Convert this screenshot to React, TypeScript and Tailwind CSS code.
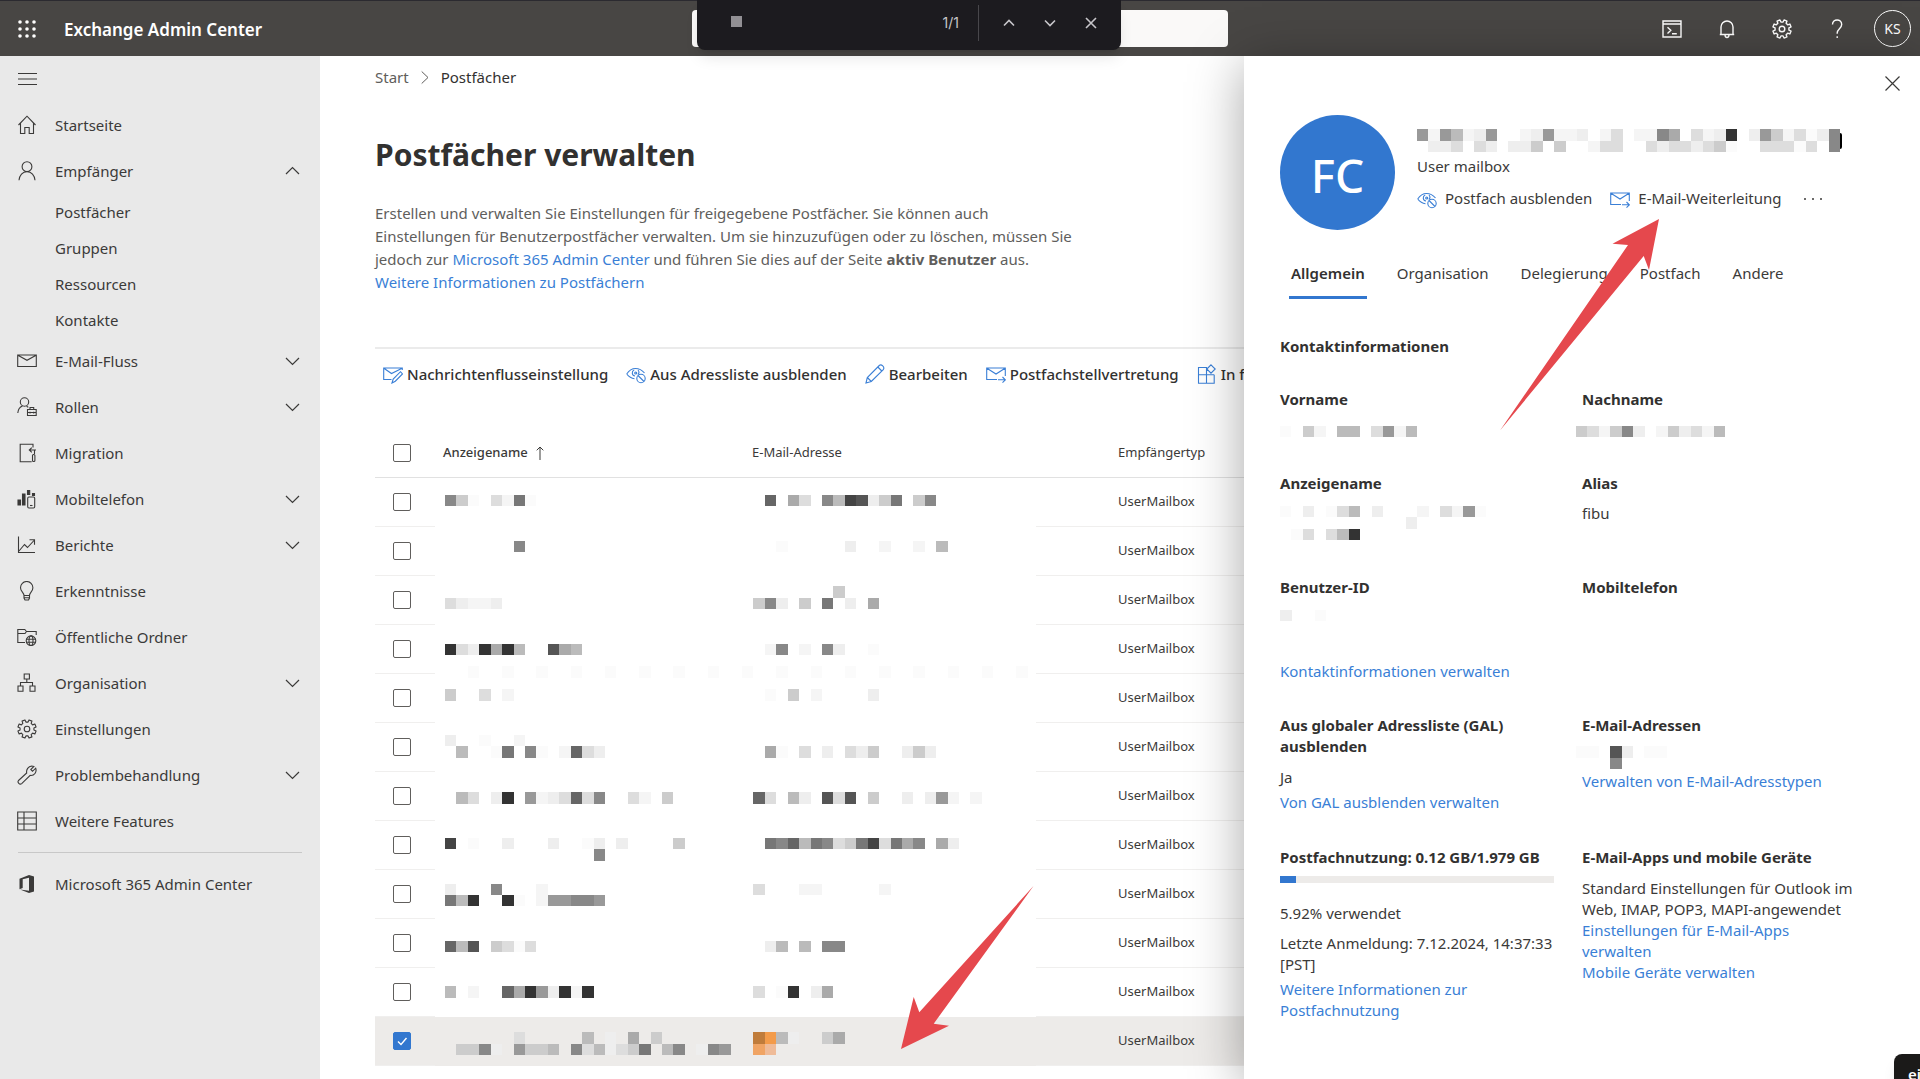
import { useState } from "react";
import type { ReactNode } from "react";

/* ---------- icons ---------- */

function Icon({ children, size = 20, className = "" }: { children: ReactNode; size?: number; className?: string }) {
  return (
    <svg
      width={size}
      height={size}
      viewBox="0 0 20 20"
      fill="none"
      stroke="currentColor"
      strokeWidth="1.1"
      className={"shrink-0 " + className}
      aria-hidden="true"
    >
      {children}
    </svg>
  );
}

// outline of a cog with eight teeth
function gearPath() {
  const points: string[] = [];
  for (let i = 0; i < 8; i++) {
    const base = (i * Math.PI) / 4 + Math.PI / 8;
    const steps = [
      [-0.24, 7],
      [-0.17, 9.3],
      [0.17, 9.3],
      [0.24, 7],
    ];
    steps.forEach(([angle, r]) => {
      const x = 10 + r * Math.cos(base + angle);
      const y = 10 + r * Math.sin(base + angle);
      points.push(`${x.toFixed(2)} ${y.toFixed(2)}`);
    });
  }
  return "M" + points.join("L") + "Z";
}

const icons = {
  home: <path d="M1.5 10 10 1.2l8.5 8.8M3.5 8v10.5h4.3v-6h4.4v6h4.3V8" />,
  person: <path d="M10 .8a4.9 4.9 0 0 1 4.9 4.9A4.9 4.9 0 0 1 10 10.6a4.9 4.9 0 0 1-4.9-4.9A4.9 4.9 0 0 1 10 .8ZM2 19.2c.4-4.800 3.600-8.600 8-8.600s7.600 3.800 8 8.600" />,
  mail: <path d="M.7 4h18.600v11.500H.7ZM.9 4.300 10 9.300l9.100-5" />,
  roles: (
    <>
      <circle cx="7.500" cy="5" r="4.200" />
      <path d="M.8 16c.3-3.500 2-6 4.700-7M9.500 9.200c.8.300 1.300.7 1.800 1.200M10.500 12.500h8.700v6h-8.700ZM13 12.500v-2h3.700v2M10.500 15.500h8.700M13 14.700v1.700M16.700 14.700v1.700" />
    </>
  ),
  migration: (
    <>
      <path d="M16 4.500V1.200H3.200v17.600h11.500M19 7h-6.500M14.800 4.700 12.300 7l2.500 2.300M17.500 7v4" />
      <rect x="15.500" y="11.500" width="2.400" height="7" rx="1" />
    </>
  ),
  mobile: (
    <>
      <path d="M1 11h2.500v5H1ZM5.500 5H8v11H5.500ZM10.500 1.500h2.200v4h-2.200ZM15.500 4.500h2v2h-2Z" fill="currentColor" />
      <rect x="10.700" y="8" width="7" height="11" rx="1.200" />
      <path d="M13 16.500h2.500" />
    </>
  ),
  reports: <path d="M1.500 1.500v16H18M2 16 7.500 9.500l3 3 6.500-7M12.500 4.700h5v5" />,
  bulb: <path d="M7 14.500c0-3-3.500-4-3.500-7.800a6.200 6.200 0 0 1 12.400 0c0 3.800-3.400 4.800-3.400 7.800ZM7 14.500V17l1 2h3.500l1-2v-2.500M7.200 16.700h5.300" />,
  folder: (
    <>
      <path d="M8 15.500H.8V2.500h7l1.700 2h9.700V8M.8 6.500H8l1.500-2" />
      <circle cx="14" cy="13.700" r="4.800" />
      <ellipse cx="14" cy="13.700" rx="2" ry="4.800" />
      <path d="M9.200 12.200h9.600M9.200 15.200h9.600" />
    </>
  ),
  org: <path d="M7.200 1h5.200v5H7.200ZM1 13h5v5.200H1ZM13 13h5v5.200h-5ZM9.800 6v3.500M3.500 13V9.500h12V13" />,
  gear: (
    <>
      <path d={gearPath()} strokeLinejoin="round" />
      <circle cx="10" cy="10" r="2.800" />
    </>
  ),
  wrench: <path d="M1.500 15.500 9.700 8c-.7-3.300 1.600-6.700 5-7 1 0 1.500.1 2.200.4L13.800 4.500l1.700 1.800L18.700 3.200c1.400 4-1.500 7.700-5.500 7.200L4.700 18.600c-2 1.500-4.700-1-3.200-3.100Z" />,
  features: <path d="M.7 1h18.600v18H.7ZM.7 7h18.600M.7 13h18.600M7 1v18" />,
  office: (
    <path
      d="M2.500 4.800 12 1l5 1.500v15L12 19l-9-3.500 9 1.200V3.800L5.700 5.300v8.600l-3.200 1.400Z"
      fill="currentColor"
      stroke="none"
    />
  ),
  mailEdit: (
    <>
      <path d="M8.500 15.500H.7V4h18.600v2M.9 4.300l7.600 5.200 10.600-5.200" />
      <path d="M9 19l1.200-4L17.500 7.700l2 2.200-7.200 7.300Z" />
    </>
  ),
  eyeOff: (
    <>
      <path d="M.7 10C3 6.500 6 4.500 9.500 4.500S16 6 18.500 9M.7 10c2 2.500 4.500 4.300 7.800 4.700M12 6c1.200 1.500 1 3.500-.2 4.500M9 12c-3.500-.5-3.500-5-.8-6" />
      <circle cx="9.700" cy="9" r="1" />
      <circle cx="15" cy="14.500" r="4.200" />
      <path d="m12 11.500 6 6" />
    </>
  ),
  pencil: <path d="M1 19l1.300-5.500L14.500 1.300c2-1.300 5.300 1.700 4 4L6.300 17.500ZM2.300 13.500l4 4M12.800 3l4 4" />,
  mailForward: <path d="M11 15.500H.7V4h18.600v8M.9 4.300 10 10l9.100-5.700M12 15.800h7M16.500 13l2.800 2.800-2.800 2.800" />,
  apps: <path d="M10 3.500H1.500v15.700h15.700V10.700M1.500 10.700h15.700M9.500 3.500v15.700M14 .8l4.200 4.200L14 9.200 9.800 5Z" />,
  shell: <path d="M1 2h18v16H1ZM1 5h18M5.500 8.200l3.300 3.100-3.300 3.100M10 14.700h4.800" strokeWidth="1.400" />,
  bell: <path d="M4 15.500V8a6 6 0 0 1 12 0v7.500M2.800 15.500h14.400M8 15.700c0 3.700 4 3.700 4 0" strokeWidth="1.400" />,
  question: <path d="M5.500 5.500c0-6 9.200-6 9.200 0 0 4-4.500 4.500-4.500 8.500v.8M10.200 17.300v1.800" strokeWidth="1.400" />,
};

function Chevron({ open }: { open?: boolean }) {
  return (
    <svg width="15" height="15" viewBox="0 0 15 15" fill="none" stroke="currentColor" strokeWidth="1.200" aria-hidden="true">
      <path d={open ? "M1 10 7.500 3.500 14 10" : "M1 4 7.500 10.500 14 4"} />
    </svg>
  );
}

/* ---------- pixelated names and addresses ---------- */

const TONES: Record<string, string> = {
  f: "#f5f5f5",
  g: "#fbfbfb",
  P: "#c07c3b",
  Q: "#f39b4a",
  R: "#f0a464",
  S: "#efbb98",
};

// [row, column, one tone for each block]
type Run = [number, number, string];

function Mosaic({ runs, cols, rows, className = "" }: { runs: Run[]; cols: number; rows: number; className?: string }) {
  return (
    <svg
      width={Math.round((cols * 80) / 7)}
      height={Math.round((rows * 80) / 7)}
      viewBox={`0 0 ${cols} ${rows}`}
      preserveAspectRatio="none"
      shapeRendering="crispEdges"
      className={"block shrink-0 " + className}
      aria-hidden="true"
    >
      {runs.flatMap(([row, col, tones]) =>
        tones.split("").map((t, i) =>
          t === "." ? null : (
            <rect key={`${row}-${col + i}`} x={col + i} y={row} width="1" height="1" fill={TONES[t] ?? `#${t}${t}${t}`} />
          )
        )
      )}
    </svg>
  );
}

const tableRuns: Run[] = [
  [0, 0, "8cg.df7g"],
  [0, 28, "6.ad.8b45ec7.c8"],
  [4, 6, "8"],
  [4, 29, "g.....e..f..f.b"],
  [8, 34, "c"],
  [9, 0, "deffe"],
  [9, 27, "c8e.c.7.e.a"],
  [13, 0, "3de3a3b..5ab"],
  [13, 28, "f8.f.8e..g"],
  [15, 2, "g..g..g..g..g..g..g..g..g..g..g..g..g..g..g..g..g"],
  [17, 0, "c..d.f"],
  [17, 28, "g.c.f....e"],
  [21, 0, "e..g..f"],
  [22, 1, "b..g7.8g.f6de"],
  [22, 28, "ag.d.e.dec..ece"],
  [26, 1, "bd.e3.9fed6d8..df.c"],
  [26, 27, "6d.be.5d5.c..e.e9f.f"],
  [30, 0, "4.g..e...e..ge.e....c"],
  [30, 28, "786b78dc74d7a8.ae"],
  [31, 13, "8"],
  [34, 0, "e...8...f"],
  [34, 27, "d...ff.....f"],
  [35, 0, "7b3..3g.f99889"],
  [39, 0, "6b5.cdgd"],
  [39, 28, "eb.b.88"],
  [43, 0, "b.f..6a39e3f3"],
  [43, 27, "d.g3.ea"],
  [47, 6, "d.....b.e.a.c"],
  [47, 27, "PQbe..ca"],
  [48, 1, "cc8e.9ccb.8dbedc7.b8.e89"],
  [48, 27, "RS"],
];

const titleRuns: Run[] = [
  [0, 0, "9f9bfe9..fe9ffe.fd.ff8a.dfe3.e9cfdge8"],
  [1, 1, "eed.de.eec.c..fdd..dedded"],
  [1, 26, "cg..dddgd.8"],
];

/* ---------- sidebar ---------- */

type NavItem = { label: string; icon: ReactNode; open?: boolean; children?: string[]; more?: boolean };

const navItems: NavItem[] = [
  { label: "Startseite", icon: icons.home },
  { label: "Empfänger", icon: icons.person, open: true, more: true, children: ["Postfächer", "Gruppen", "Ressourcen", "Kontakte"] },
  { label: "E-Mail-Fluss", icon: icons.mail, more: true },
  { label: "Rollen", icon: icons.roles, more: true },
  { label: "Migration", icon: icons.migration },
  { label: "Mobiltelefon", icon: icons.mobile, more: true },
  { label: "Berichte", icon: icons.reports, more: true },
  { label: "Erkenntnisse", icon: icons.bulb },
  { label: "Öffentliche Ordner", icon: icons.folder },
  { label: "Organisation", icon: icons.org, more: true },
  { label: "Einstellungen", icon: icons.gear },
  { label: "Problembehandlung", icon: icons.wrench, more: true },
  { label: "Weitere Features", icon: icons.features },
];

function Sidebar() {
  return (
    <nav className="w-80 shrink-0 bg-[#e9e9e9] text-[#3b3a39]">
      <button aria-label="Navigation" className="flex h-[46px] items-center pl-[18px]">
        <svg width="19" height="14" viewBox="0 0 19 14" stroke="currentColor" strokeWidth="1.200" aria-hidden="true">
          <path d="M0 1.500h19M0 7h19M0 12.500h19" />
        </svg>
      </button>
      <ul>
        {navItems.map((item) => (
          <li key={item.label}>
            <button className="flex h-[46px] w-full items-center pl-[17px] pr-5 text-left">
              <Icon>{item.icon}</Icon>
              <span className="ml-[18px] flex-1">{item.label}</span>
              {item.more && <Chevron open={item.open} />}
            </button>
            {item.children?.map((child) => (
              <a key={child} href="#" className="flex h-9 items-center pl-[55px]">
                {child}
              </a>
            ))}
          </li>
        ))}
      </ul>
      <hr className="mx-[18px] my-2 border-[#c8c8c8]" />
      <a href="#" className="flex h-[46px] items-center pl-[17px]">
        <Icon>{icons.office}</Icon>
        <span className="ml-[18px]">Microsoft 365 Admin Center</span>
      </a>
    </nav>
  );
}

/* ---------- header ---------- */

function Header() {
  return (
    <header className="relative flex h-14 items-center border-t border-[#2b2a30] bg-[#484644] text-white">
      <button aria-label="App-Startfeld" className="pl-[18px]">
        <svg width="18" height="18" viewBox="0 0 18 18" fill="currentColor" aria-hidden="true">
          {[2, 9, 16].map((y) => [2, 9, 16].map((x) => <circle key={`${x}-${y}`} cx={x} cy={y} r="1.800" />))}
        </svg>
      </button>
      <span className="ml-7 pt-0.5 text-[17px] font-semibold">Exchange Admin Center</span>
      <input
        aria-label="Suche"
        className="absolute left-1/2 top-[9px] h-[37px] w-[536px] -translate-x-1/2 rounded bg-[#faf9f8]"
      />
      <div className="ml-auto flex items-center gap-[35px] pr-[9px]">
        <button aria-label="Cloud Shell"><Icon>{icons.shell}</Icon></button>
        <button aria-label="Benachrichtigungen"><Icon>{icons.bell}</Icon></button>
        <button aria-label="Einstellungen"><Icon className="stroke-[1.400]">{icons.gear}</Icon></button>
        <button aria-label="Hilfe"><Icon>{icons.question}</Icon></button>
        <button className="-ml-2 flex size-[37px] items-center justify-center rounded-full border border-white text-[14px]">
          KS
        </button>
      </div>
    </header>
  );
}

function FindBar() {
  return (
    <div className="absolute left-[697px] top-0 z-30 flex h-[50px] w-[424px] items-center rounded-b-lg bg-[#1c1b1f] pl-[34px] pr-[23px] text-[#c7c6ca] shadow-lg">
      <span className="mb-2 size-[11px] bg-[#929094]" />
      <input aria-label="Auf Seite suchen" className="w-0 flex-1 bg-transparent outline-none" />
      <span className="mb-1 font-[Inter,sans-serif] text-sm">1/1</span>
      <span className="mb-1 ml-[19px] h-9 w-px bg-[#48474b]" />
      <div className="mb-1 ml-[23px] flex gap-[27px]">
        {[
          ["Zurück", "m2 9.500 5-5 5 5"],
          ["Weiter", "m2 4.500 5 5 5-5"],
          ["Schließen", "m2 2 10 10M12 2 2 12"],
        ].map(([label, d]) => (
          <button key={label} aria-label={label}>
            <svg width="14" height="14" viewBox="0 0 14 14" fill="none" stroke="currentColor" strokeWidth="1.600" aria-hidden="true">
              <path d={d} />
            </svg>
          </button>
        ))}
      </div>
    </div>
  );
}

/* ---------- mailbox list ---------- */

const toolbar = [
  { label: "Nachrichtenflusseinstellung", icon: icons.mailEdit },
  { label: "Aus Adressliste ausblenden", icon: icons.eyeOff },
  { label: "Bearbeiten", icon: icons.pencil },
  { label: "Postfachstellvertretung", icon: icons.mailForward },
  { label: "In freigegebenes Postfach konvertieren", icon: icons.apps },
];

function Checkbox({ label, checked, onChange }: { label: string; checked: boolean; onChange: () => void }) {
  return (
    <label className="relative ml-[18px] block size-[18px]">
      <input
        type="checkbox"
        aria-label={label}
        checked={checked}
        onChange={onChange}
        className="block size-[18px] appearance-none rounded-xs border border-[#605e5c] bg-white checked:border-[#3277cf] checked:bg-[#3277cf]"
      />
      {checked && (
        <svg width="18" height="18" viewBox="0 0 18 18" fill="none" stroke="white" strokeWidth="1.400" className="pointer-events-none absolute inset-0">
          <path d="m5 9.500 3 3 5.500-6.500" />
        </svg>
      )}
    </label>
  );
}

function MailboxTable() {
  const [selected, setSelected] = useState<number[]>([11]);

  const toggle = (i: number) =>
    setSelected(selected.includes(i) ? selected.filter((n) => n !== i) : [...selected, i]);

  return (
    <div className="relative mt-[30px]">
      <table className="w-full table-fixed border-separate border-spacing-0 text-left text-[13px] text-[#3b3a39]">
        <thead>
          <tr className="h-[49px]">
            <th className="w-[60px] border-b border-[#e1e1e1]">
              <Checkbox label="Alle auswählen" checked={false} onChange={() => setSelected([])} />
            </th>
            <th className="w-[317px] border-b border-[#e1e1e1] pl-2 font-medium">
              <span className="flex items-center gap-2">
                Anzeigename
                <svg width="8" height="14" viewBox="0 0 8 14" fill="none" stroke="currentColor" aria-hidden="true">
                  <path d="M4 14V1M.7 4.300 4 1l3.300 3.300" />
                </svg>
              </span>
            </th>
            <th className="w-[284px] border-b border-[#e1e1e1] font-normal">E-Mail-Adresse</th>
            <th className="border-b border-[#e1e1e1] pl-[82px] font-normal">Empfängertyp</th>
          </tr>
        </thead>
        <tbody>
          {Array.from({ length: 12 }, (_, i) => {
            const on = selected.includes(i);
            return (
              <tr key={i} className={on ? "h-[49px] bg-[#edebe9]" : "h-[49px]"}>
                <td className="border-b border-[#f0efee]">
                  <Checkbox label={`Postfach ${i + 1}`} checked={on} onChange={() => toggle(i)} />
                </td>
                <td />
                <td />
                <td className="border-b border-[#f0efee] pl-[82px]">UserMailbox</td>
              </tr>
            );
          })}
        </tbody>
      </table>
      <Mosaic runs={tableRuns} cols={52} rows={49} className="pointer-events-none absolute left-[70px] top-[66px]" />
    </div>
  );
}

function Mailboxes() {
  return (
    <main className="relative min-w-0 flex-1 overflow-hidden bg-white pl-[55px]">
      <div className="mt-[11px] flex h-5 items-center gap-3 text-[#605e5c]">
        <a href="#">Start</a>
        <svg width="8" height="15" viewBox="0 0 8 15" fill="none" stroke="currentColor" aria-hidden="true">
          <path d="M.7 1.500 7 7.500.7 13.500" />
        </svg>
        <span className="text-[#323130]">Postfächer</span>
      </div>
      <h1 className="mt-12 text-[30px] font-bold leading-10 text-[#323130]">Postfächer verwalten</h1>
      <p className="mt-[27px] leading-[23px] text-[#605e5c]">
        Erstellen und verwalten Sie Einstellungen für freigegebene Postfächer. Sie können auch
        <br />
        Einstellungen für Benutzerpostfächer verwalten. Um sie hinzuzufügen oder zu löschen, müssen Sie
        <br />
        jedoch zur <Link>Microsoft 365 Admin Center</Link> und führen Sie dies auf der Seite{" "}
        <b className="font-bold">aktiv Benutzer</b> aus.
        <br />
        <Link>Weitere Informationen zu Postfächern</Link>
      </p>
      <div className="mt-[53px] flex h-[52px] items-center gap-[18px] whitespace-nowrap border-t-2 border-[#ebebeb] pl-2 font-medium text-[#323130]">
        {toolbar.map((t) => (
          <button key={t.label} className="flex shrink-0 items-center gap-1">
            <Icon className="text-[#3a7fd6]">{t.icon}</Icon>
            {t.label}
          </button>
        ))}
      </div>
      <MailboxTable />
      <svg width="134" height="166" viewBox="0 0 134 166" className="pointer-events-none absolute left-[580px] top-[829px]" aria-hidden="true">
        <path d="M133.500 1 19.300 127.300 13.700 112 1 164 49 140.700 33.700 138.700Z" fill="#e5484d" />
      </svg>
    </main>
  );
}

/* ---------- details panel ---------- */

function Link({ children }: { children: ReactNode }) {
  return (
    <a href="#" className="text-[#3a7fd6]">
      {children}
    </a>
  );
}

function Field({ title, children, className = "" }: { title: string; children?: ReactNode; className?: string }) {
  return (
    <section className={className}>
      <h3 className="font-bold text-[#323130]">{title}</h3>
      {children}
    </section>
  );
}

const tabs = ["Allgemein", "Organisation", "Delegierung", "Postfach", "Andere"];

function DetailsPanel() {
  const [tab, setTab] = useState(tabs[0]);

  return (
    <aside className="absolute bottom-0 right-0 top-14 z-10 w-[676px] bg-white px-9 leading-[21px] text-[#3b3a39] shadow-[0_8px_50px_rgba(0,0,0,0.35)]">
      <button aria-label="Schließen" className="absolute right-5 top-5">
        <svg width="15" height="15" viewBox="0 0 15 15" stroke="currentColor" strokeWidth="1.200" aria-hidden="true">
          <path d="m.5.5 14 14M14.500.5l-14 14" />
        </svg>
      </button>

      <div className="flex pt-[59px]">
        <div className="flex size-[115px] shrink-0 items-center justify-center rounded-full bg-[#3277cf] pt-1.5 text-[46px] font-medium text-white">
          FC
        </div>
        <div className="ml-[22px] pt-3.5">
          <div className="flex items-center">
            <Mosaic runs={titleRuns} cols={37} rows={2} />
            <span className="h-4 w-0.5 rounded-r bg-black" />
          </div>
          <p className="mt-1">User mailbox</p>
          <div className="mt-[11px] flex items-center gap-[18px]">
            <button className="flex items-center gap-2">
              <Icon className="text-[#3a7fd6]">{icons.eyeOff}</Icon>
              Postfach ausblenden
            </button>
            <button className="flex items-center gap-2">
              <Icon className="text-[#3a7fd6]">{icons.mailForward}</Icon>
              E-Mail-Weiterleitung
            </button>
            <button aria-label="Mehr" className="ml-1 flex gap-1.5">
              <span className="size-0.5 rounded-full bg-[#3b3a39]" />
              <span className="size-0.5 rounded-full bg-[#3b3a39]" />
              <span className="size-0.5 rounded-full bg-[#3b3a39]" />
            </button>
          </div>
        </div>
      </div>

      <div role="tablist" className="mt-[19px] flex gap-7 pl-[9px]">
        {tabs.map((t) => (
          <button
            key={t}
            role="tab"
            aria-selected={t === tab}
            onClick={() => setTab(t)}
            className={
              t === tab
                ? "h-[50px] border-b-3 border-[#3277cf] px-0.5 pt-0.5 font-semibold text-[#323130]"
                : "h-[50px] border-b-3 border-transparent px-0.5 pt-0.5"
            }
          >
            {t}
          </button>
        ))}
      </div>

      <h2 className="mt-[37px] font-bold text-[#323130]">Kontaktinformationen</h2>
      <div className="mt-8 grid grid-cols-[302px_1fr]">
        <Field title="Vorname" className="h-[84px]">
          <Mosaic className="mt-4" cols={12} rows={1} runs={[[0, 0, "g.cf.bb.d9fb"]]} />
        </Field>
        <Field title="Nachname">
          <Mosaic className="-ml-1.5 mt-4" cols={13} rows={1} runs={[[0, 0, "cdfc8e.fcedfb"]]} />
        </Field>
        <Field title="Anzeigename" className="h-[104px]">
          <Mosaic
            className="mt-3"
            cols={18}
            rows={3}
            runs={[
              [0, 0, "g.e.gdb.e...f.df9g"],
              [1, 11, "e"],
              [2, 1, "gd.db3"],
            ]}
          />
        </Field>
        <Field title="Alias">
          <p className="mt-[9px]">fibu</p>
        </Field>
        <Field title="Benutzer-ID" className="h-[84px]">
          <Mosaic className="mt-3" cols={4} rows={1} runs={[[0, 0, "e..g"]]} />
        </Field>
        <Field title="Mobiltelefon" />
      </div>
      <Link>Kontaktinformationen verwalten</Link>

      <div className="mt-[33px] grid grid-cols-[302px_1fr]">
        <Field title="Aus globaler Adressliste (GAL) ausblenden" className="h-[132px] pr-6">
          <p className="mt-2.5">Ja</p>
          <p className="mt-1">
            <Link>Von GAL ausblenden verwalten</Link>
          </p>
        </Field>
        <Field title="E-Mail-Adressen">
          <Mosaic
            className="-ml-1.5 mt-2.5"
            cols={8}
            rows={2}
            runs={[
              [0, 0, "gg.5e.gg"],
              [1, 3, "8"],
            ]}
          />
          <p className="mt-0.5">
            <Link>Verwalten von E-Mail-Adresstypen</Link>
          </p>
        </Field>
        <Field title="Postfachnutzung: 0.12 GB/1.979 GB" className="whitespace-nowrap pr-7">
          <div className="mt-2 h-[7px] bg-[#edebe9]">
            <div className="h-full bg-[#3277cf]" style={{ width: "5.92%" }} />
          </div>
          <p className="mt-5">5.92% verwendet</p>
          <p className="mt-[9px]">
            Letzte Anmeldung: 7.12.2024, 14:37:33
            <br />
            [PST]
          </p>
          <p className="mt-1">
            <Link>
              Weitere Informationen zur
              <br />
              Postfachnutzung
            </Link>
          </p>
        </Field>
        <Field title="E-Mail-Apps und mobile Geräte" className="whitespace-nowrap">
          <p className="mt-2.5">
            Standard Einstellungen für Outlook im
            <br />
            Web, IMAP, POP3, MAPI-angewendet
          </p>
          <p>
            <Link>
              Einstellungen für E-Mail-Apps
              <br />
              verwalten
            </Link>
          </p>
          <p>
            <Link>Mobile Geräte verwalten</Link>
          </p>
        </Field>
      </div>

      <svg width="160" height="213" viewBox="0 0 160 213" className="pointer-events-none absolute right-[260px] top-[162px]" aria-hidden="true">
        <path d="M159 1 112.500 25.700 128 27 0 212.500 143.700 38 149 52Z" fill="#e5484d" />
      </svg>
      <div className="absolute bottom-0 right-0 h-[25px] w-[26px] overflow-hidden rounded-tl-lg bg-[#1b1a19] pl-3.5 pt-2.5 font-semibold leading-5 text-white shadow-lg">
        ei
      </div>
    </aside>
  );
}

export default function App() {
  return (
    <div className="relative flex min-h-screen flex-col overflow-hidden bg-white font-['Noto_Sans',sans-serif] text-[15px]">
      <Header />
      <div className="flex flex-1">
        <Sidebar />
        <Mailboxes />
      </div>
      <DetailsPanel />
      <FindBar />
    </div>
  );
}
